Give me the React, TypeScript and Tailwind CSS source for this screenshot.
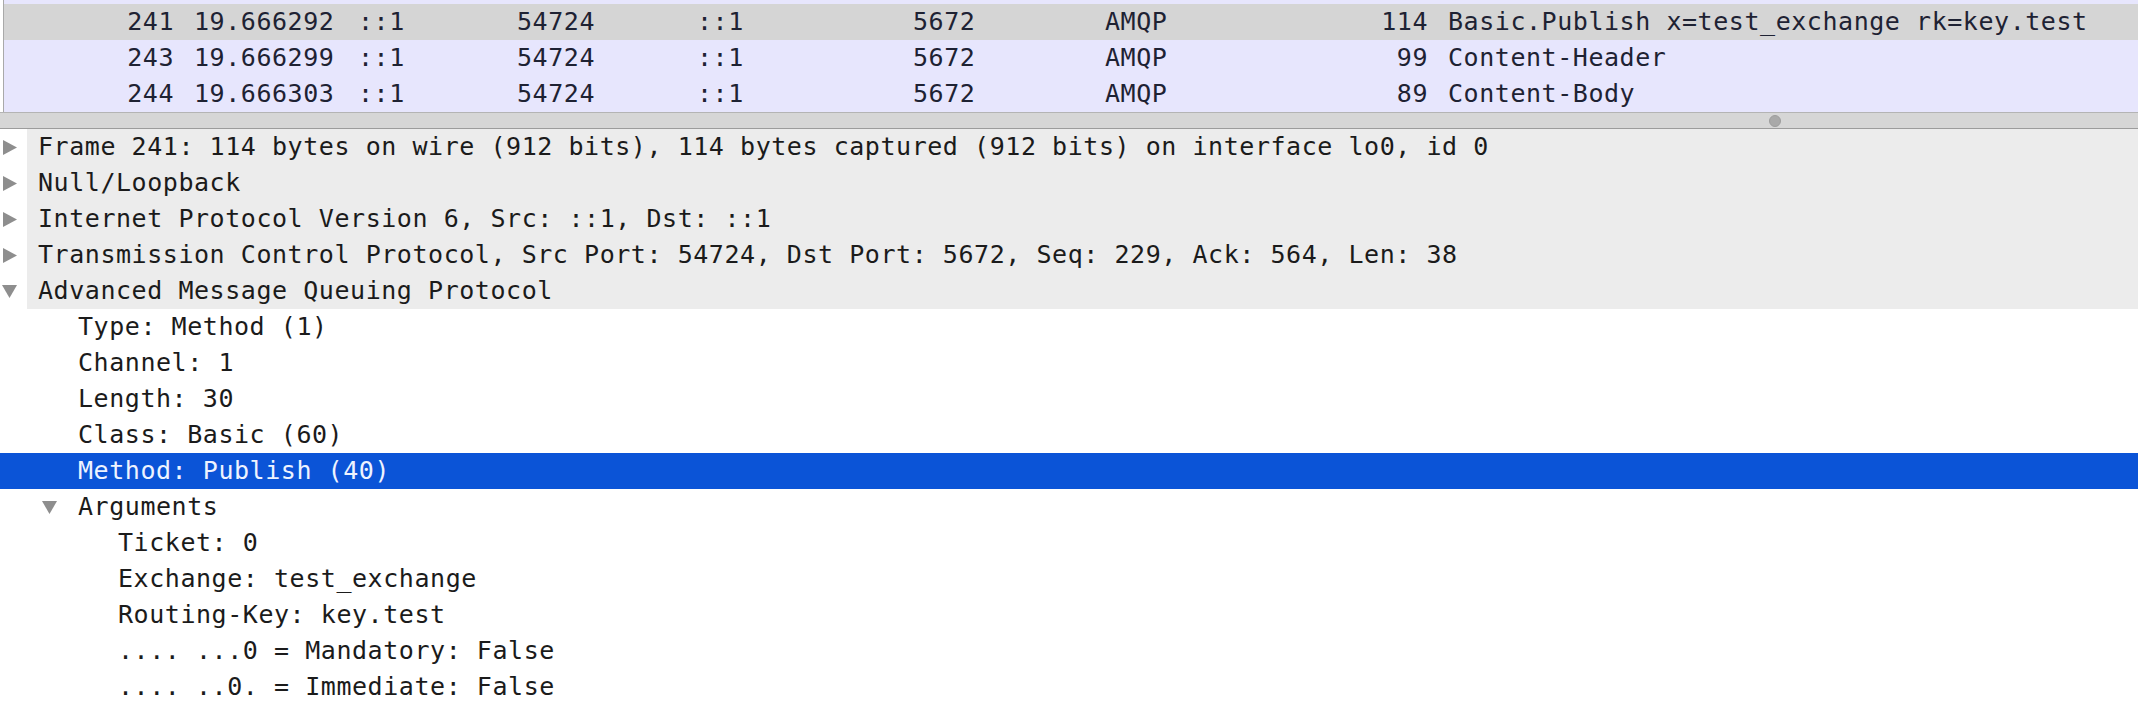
import React from "react";

type Pkt = { no: string; time: string; src: string; sport: string; dst: string; dport: string; proto: string; len: string; info: string; sel?: boolean };

const packets: Pkt[] = [
  { no: "241", time: "19.666292", src: "::1", sport: "54724", dst: "::1", dport: "5672", proto: "AMQP", len: "114", info: "Basic.Publish x=test_exchange rk=key.test", sel: true },
  { no: "243", time: "19.666299", src: "::1", sport: "54724", dst: "::1", dport: "5672", proto: "AMQP", len: "99", info: "Content-Header" },
  { no: "244", time: "19.666303", src: "::1", sport: "54724", dst: "::1", dport: "5672", proto: "AMQP", len: "89", info: "Content-Body" },
];

function Tri({ down }: { down?: boolean }) {
  return down ? (
    <svg width="15" height="13" viewBox="0 0 15 13" className="block">
      <polygon points="0,0 15,0 7.5,13" fill="#8e8e8e" />
    </svg>
  ) : (
    <svg width="14" height="15" viewBox="0 0 14 15" className="block">
      <polygon points="0,0 14,7.5 0,15" fill="#8e8e8e" />
    </svg>
  );
}

const topRows = [
  "Frame 241: 114 bytes on wire (912 bits), 114 bytes captured (912 bits) on interface lo0, id 0",
  "Null/Loopback",
  "Internet Protocol Version 6, Src: ::1, Dst: ::1",
  "Transmission Control Protocol, Src Port: 54724, Dst Port: 5672, Seq: 229, Ack: 564, Len: 38",
];

const amqpChildren = ["Type: Method (1)", "Channel: 1", "Length: 30", "Class: Basic (60)"];
const argChildren = [
  "Ticket: 0",
  "Exchange: test_exchange",
  "Routing-Key: key.test",
  ".... ...0 = Mandatory: False",
  ".... ..0. = Immediate: False",
];

export default function App() {
  return (
    <div className="w-[2138px] h-[724px] overflow-hidden bg-white font-['DejaVu_Sans_Mono',monospace] text-[25px] tracking-[0.55px] leading-[36px]">
      {/* Packet list */}
      <div className="flex pl-[3px] bg-white">
        <div className="flex-1 border-l border-[#a9a9a9] text-[#1e2233]">
          <div className="h-[4px] bg-[#e7e6fd]" />
          {packets.map((p) => (
            <div key={p.no} className={`flex h-[36px] items-center whitespace-pre ${p.sel ? "bg-[#d5d5d5]" : "bg-[#e7e6fd]"}`}>
              <div className="w-[180px] shrink-0 text-right pr-[10px]">{p.no}</div>
              <div className="w-[164px] shrink-0 pl-[10px]">{p.time}</div>
              <div className="w-[159px] shrink-0 pl-[10px]">{p.src}</div>
              <div className="w-[180px] shrink-0 pl-[10px]">{p.sport}</div>
              <div className="w-[216px] shrink-0 pl-[10px]">{p.dst}</div>
              <div className="w-[192px] shrink-0 pl-[10px]">{p.dport}</div>
              <div className="w-[205px] shrink-0 pl-[10px]">{p.proto}</div>
              <div className="w-[138px] shrink-0 text-right pr-[10px]">{p.len}</div>
              <div className="flex-1 pl-[10px]">{p.info}</div>
            </div>
          ))}
        </div>
      </div>

      {/* Splitter */}
      <div className="h-[17px] border-t border-b border-t-[#b4b4b4] border-b-[#9c9c9c] bg-[#d6d6d6] flex items-center">
        <div className="ml-[1769px] w-[12px] h-[12px] rounded-full bg-[#a9a9a9] border border-[#9d9d9d]" />
      </div>

      {/* Packet details */}
      <div className="text-[#1b1b1b] whitespace-pre">
        {topRows.map((t) => (
          <div key={t} className="flex h-[36px]">
            <div className="w-[27px] shrink-0 bg-white flex items-center pl-[3px]">
              <Tri />
            </div>
            <div className="flex-1 bg-[#ececec] pl-[11px] flex items-center">{t}</div>
          </div>
        ))}
        <div className="flex h-[36px]">
          <div className="w-[27px] shrink-0 bg-white flex items-center pl-[2px]">
            <Tri down />
          </div>
          <div className="flex-1 bg-[#ececec] pl-[11px] flex items-center">Advanced Message Queuing Protocol</div>
        </div>
        {amqpChildren.map((t) => (
          <div key={t} className="h-[36px] flex items-center pl-[78px]">{t}</div>
        ))}
        <div className="h-[36px] flex items-center pl-[78px] bg-[#0b54d7] text-[#eef3ff]">Method: Publish (40)</div>
        <div className="h-[36px] flex items-center">
          <div className="w-[78px] shrink-0 flex items-center pl-[42px]">
            <Tri down />
          </div>
          <div>Arguments</div>
        </div>
        {argChildren.map((t) => (
          <div key={t} className="h-[36px] flex items-center pl-[118px]">{t}</div>
        ))}
      </div>
    </div>
  );
}
